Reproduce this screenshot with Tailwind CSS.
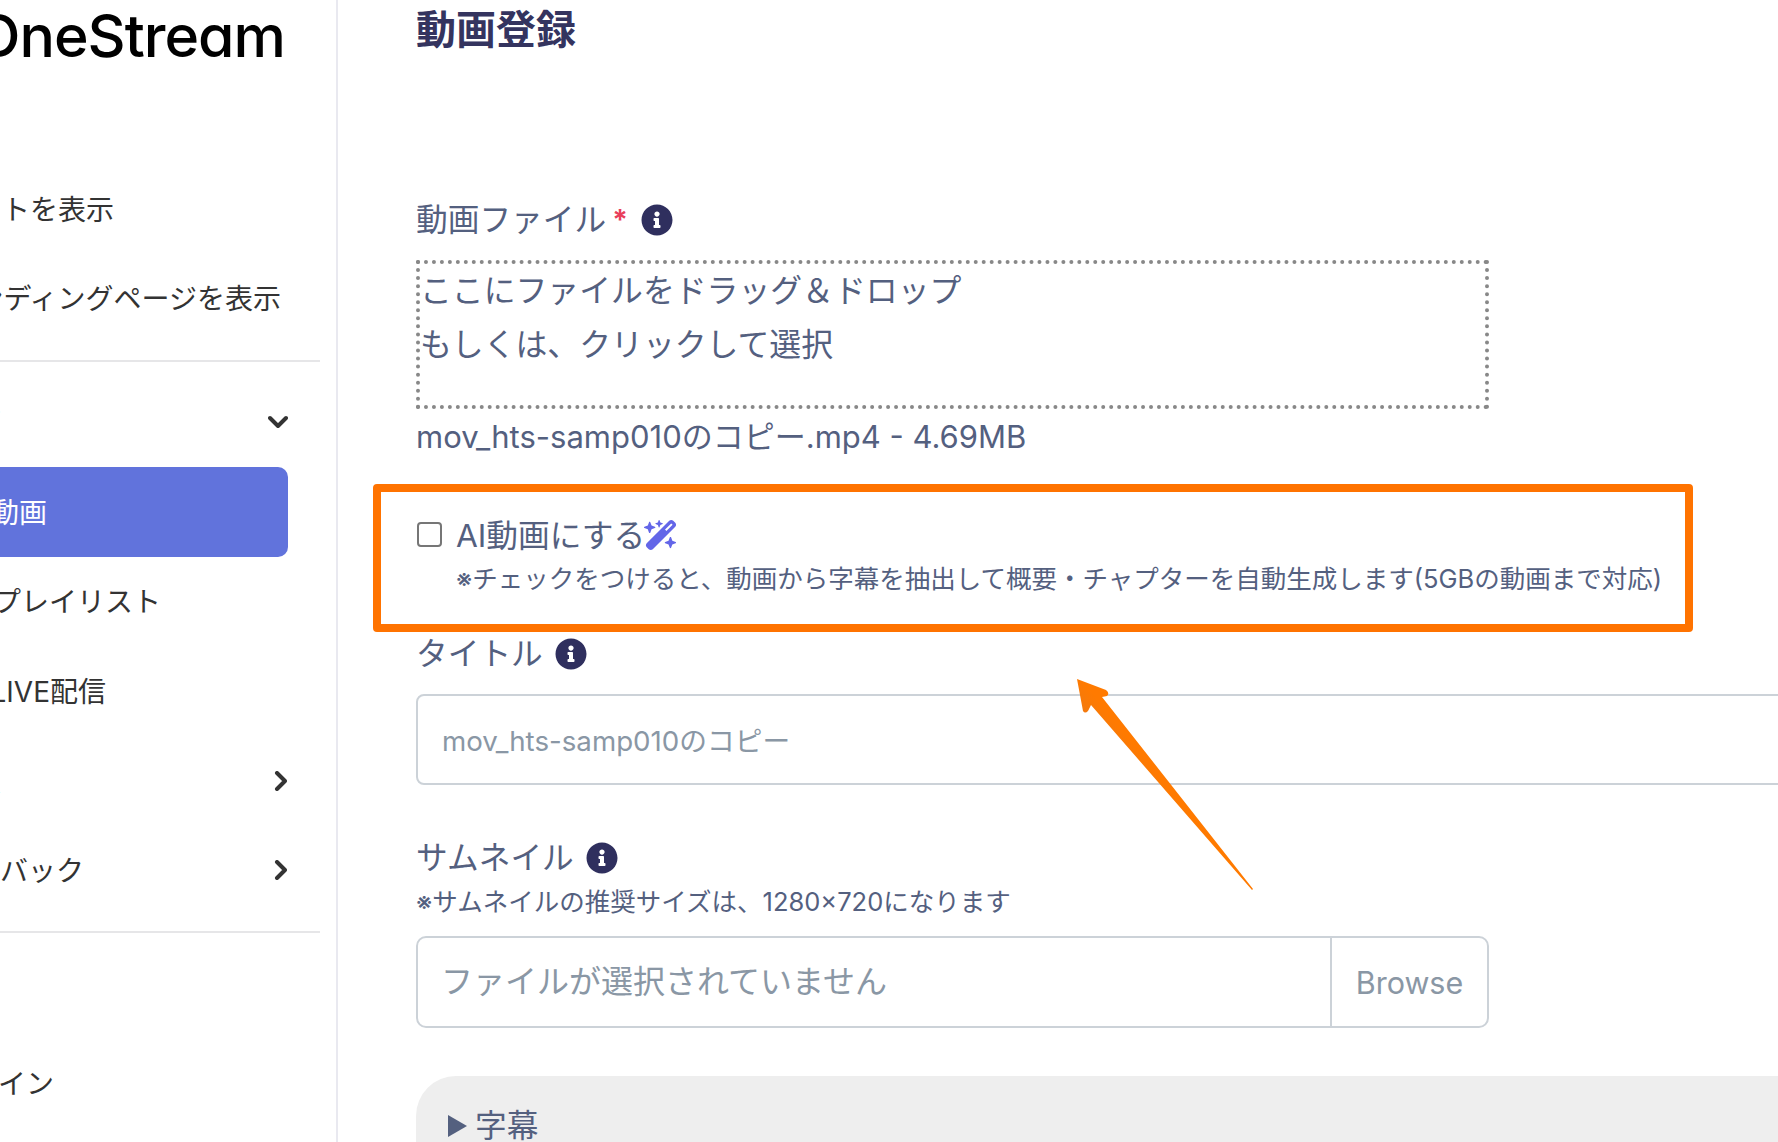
<!DOCTYPE html>
<html lang="ja">
<head>
<meta charset="utf-8">
<script src="https://cdn.jsdelivr.net/npm/@tailwindcss/browser@4"></script>
<title>動画登録</title>
</head>
<body class="bg-white">
<div class="relative flex w-[1778px] h-[1142px] overflow-hidden bg-white font-['Inter','Noto_Sans_CJK_JP',sans-serif]">

  <aside class="w-[338px] shrink-0 h-full overflow-hidden border-r-2 border-[#e9e9f0] text-[28px] text-[#333333] flex flex-col whitespace-nowrap">
    <div class="h-[70px] pt-[3px] flex items-center justify-end pr-[51px] text-[59px] font-[550] text-black tracking-[-1px] [font-feature-settings:'cv11']">OneStream</div>

    <div class="mt-[94px] h-[90px] pt-[2px] flex items-center justify-end pr-[222px]">ポータルサイトを表示</div>
    <div class="h-[88px] pt-[2px] flex items-center justify-end pr-[55px]">ランディングページを表示</div>
    <div class="mt-[18px] w-[320px] shrink-0 h-[2px] bg-[#e6e6e8]"></div>

    <div class="mt-[15px] h-[90px] flex items-center pl-[268px] relative">
      <span class="absolute right-[335px] mt-[2px]">動画</span>
      <svg class="w-[20px] h-[14px]" viewBox="0 0 20 14" fill="none" stroke="#333" stroke-width="4" stroke-linecap="round" stroke-linejoin="round"><path d="M2 3l8 8 8-8"/></svg>
    </div>
    <div class="h-[90px] pt-[2px] w-[288px] shrink-0 bg-[#6173dc] rounded-r-[10px] flex items-center justify-end pr-[241px] text-white">動画</div>
    <div class="h-[89px] flex items-center justify-end pr-[175px]">再生プレイリスト</div>
    <div class="h-[90px] pt-[2px] flex items-center justify-end pr-[230px]">LIVE配信</div>
    <div class="h-[89px] flex items-center pl-[274px] relative">
      <span class="absolute right-[335px] mt-[2px]">設定</span>
      <svg class="w-[13px] h-[20px]" viewBox="0 0 13 20" fill="none" stroke="#333" stroke-width="4" stroke-linecap="round" stroke-linejoin="round"><path d="M3 2l8 8-8 8"/></svg>
    </div>
    <div class="h-[89px] flex items-center pl-[274px] relative">
      <span class="absolute right-[252px] mt-[2px]">フィードバック</span>
      <svg class="w-[13px] h-[20px]" viewBox="0 0 13 20" fill="none" stroke="#333" stroke-width="4" stroke-linecap="round" stroke-linejoin="round"><path d="M3 2l8 8-8 8"/></svg>
    </div>
    <div class="mt-[17px] w-[320px] shrink-0 h-[2px] bg-[#e6e6e8]"></div>
    <div class="mt-[106px] h-[90px] flex items-center justify-end pr-[282px]">ログイン</div>
  </aside>

  <main class="flex-1 min-w-0 pl-[78px] text-[#54607f] text-[31.7px]">
    <h1 class="h-[60px] flex items-center text-[40px] font-bold text-[#34345f]">動画登録</h1>

    <div class="mt-[140px] h-[40px] flex items-center">
      <span>動画ファイル</span>
      <span class="ml-[6px] text-[#e83e5a] font-bold text-[28px]">*</span>
      <svg class="ml-[13px] w-[32px] h-[32px]" viewBox="0 0 512 512" fill="#2f2f5e"><path d="M256 8C119.043 8 8 119.083 8 256c0 136.997 111.043 248 248 248s248-111.003 248-248C504 119.083 392.957 8 256 8zm0 110c23.196 0 42 18.804 42 42s-18.804 42-42 42-42-18.804-42-42 18.804-42 42-42zm56 254c0 6.627-5.373 12-12 12h-88c-6.627 0-12-5.373-12-12v-24c0-6.627 5.373-12 12-12h12v-64h-12c-6.627 0-12-5.373-12-12v-24c0-6.627 5.373-12 12-12h64c6.627 0 12 5.373 12 12v100h12c6.627 0 12 5.373 12 12v24z"/></svg>
    </div>

    <div class="mt-[20px] w-[1073px] h-[149px] border-[4px] border-dotted border-[#888888] leading-[54px] text-[31.85px]">
      <div>ここにファイルをドラッグ＆ドロップ</div>
      <div>もしくは、クリックして選択</div>
    </div>

    <div class="mt-[8px] h-[40px] leading-[40px] text-[31px]">mov_hts-samp010のコピー.mp4 - 4.69MB</div>

    <div class="mt-[27px] -ml-[43px] w-[1320px] h-[148px] border-[8px] border-[#ff7300] rounded-[4px] pl-[36px] pt-[26px]">
      <div class="flex items-center h-[32px]">
        <span class="w-[25px] h-[25px] border-2 border-[#767676] rounded-[4px] bg-white"></span>
        <span class="ml-[14px] mt-[3px]">AI動画にする</span>
        <svg class="w-[34px] h-[34px] -ml-[1px] mt-[2px]" viewBox="0 0 576 512" fill="#6366e8"><path d="M234.7 42.7L197 56.8c-3 1.1-5 4-5 7.2s2 6.1 5 7.2l37.7 14.1L248.8 123c1.1 3 4 5 7.2 5s6.1-2 7.2-5l14.1-37.7L315 71.2c3-1.1 5-4 5-7.2s-2-6.1-5-7.2L277.3 42.7 263.2 5c-1.1-3-4-5-7.2-5s-6.1 2-7.2 5L234.7 42.7zM46.1 395.4c-18.7 18.7-18.7 49.1 0 67.9l34.6 34.6c18.7 18.7 49.1 18.7 67.9 0L529.9 116.5c18.7-18.7 18.7-49.1 0-67.9L495.3 14.1c-18.7-18.7-49.1-18.7-67.9 0L46.1 395.4zM484.6 82.6l-105 105-23.3-23.3 105-105 23.3 23.3zM7.5 117.2C3 118.9 0 123.2 0 128s3 9.1 7.5 10.8L64 160l21.2 56.5c1.7 4.5 6 7.5 10.8 7.5s9.1-3 10.8-7.5L128 160l56.5-21.2c4.5-1.7 7.5-6 7.5-10.8s-3-9.1-7.5-10.8L128 96 106.8 39.5C105.1 35 100.8 32 96 32s-9.1 3-10.8 7.5L64 96 7.5 117.2zm352 256c-4.5 1.7-7.5 6-7.5 10.8s3 9.1 7.5 10.8L416 416l21.2 56.5c1.7 4.5 6 7.5 10.8 7.5s9.1-3 10.8-7.5L480 416l56.5-21.2c4.5-1.7 7.5-6 7.5-10.8s-3-9.1-7.5-10.8L480 352l-21.2-56.5c-1.7-4.5-6-7.5-10.8-7.5s-9.1 3-10.8 7.5L416 352l-56.5 21.2z"/></svg>
      </div>
      <div class="mt-[10px] ml-[39px] text-[25.5px] leading-[38px] whitespace-nowrap">※チェックをつけると、動画から字幕を抽出して概要・チャプターを自動生成します(5GBの動画まで対応)</div>
    </div>

    <div class="mt-[2px] h-[40px] flex items-center">
      <span>タイトル</span>
      <svg class="ml-[12px] w-[32px] h-[32px]" viewBox="0 0 512 512" fill="#2f2f5e"><path d="M256 8C119.043 8 8 119.083 8 256c0 136.997 111.043 248 248 248s248-111.003 248-248C504 119.083 392.957 8 256 8zm0 110c23.196 0 42 18.804 42 42s-18.804 42-42 42-42-18.804-42-42 18.804-42 42-42zm56 254c0 6.627-5.373 12-12 12h-88c-6.627 0-12-5.373-12-12v-24c0-6.627 5.373-12 12-12h12v-64h-12c-6.627 0-12-5.373-12-12v-24c0-6.627 5.373-12 12-12h64c6.627 0 12 5.373 12 12v100h12c6.627 0 12 5.373 12 12v24z"/></svg>
    </div>

    <div class="mt-[20px] w-[1500px] h-[91px] pt-[4px] border-2 border-[#ccd2d8] rounded-[8px] pl-[24px] flex items-center text-[27.7px] text-[#8a97a5]">mov_hts-samp010のコピー</div>

    <div class="mt-[53px] h-[40px] flex items-center">
      <span>サムネイル</span>
      <svg class="ml-[12px] w-[32px] h-[32px]" viewBox="0 0 512 512" fill="#2f2f5e"><path d="M256 8C119.043 8 8 119.083 8 256c0 136.997 111.043 248 248 248s248-111.003 248-248C504 119.083 392.957 8 256 8zm0 110c23.196 0 42 18.804 42 42s-18.804 42-42 42-42-18.804-42-42 18.804-42 42-42zm56 254c0 6.627-5.373 12-12 12h-88c-6.627 0-12-5.373-12-12v-24c0-6.627 5.373-12 12-12h12v-64h-12c-6.627 0-12-5.373-12-12v-24c0-6.627 5.373-12 12-12h64c6.627 0 12 5.373 12 12v100h12c6.627 0 12 5.373 12 12v24z"/></svg>
    </div>
    <div class="mt-[6px] h-[36px] leading-[36px] text-[25.5px]">※サムネイルの推奨サイズは、1280×720になります</div>

    <div class="mt-[16px] w-[1073px] h-[92px] border-2 border-[#ccd2d8] rounded-[10px] flex items-center text-[#8a97a5]">
      <div class="flex-1 pl-[23px] text-[32px]">ファイルが選択されていません</div>
      <div class="w-[157px] h-full pt-[2px] border-l-2 border-[#ccd2d8] flex items-center justify-center text-[30.5px]">Browse</div>
    </div>

    <div class="mt-[48px] w-[1500px] h-[200px] bg-[#eeeeee] rounded-tl-[40px] pt-[30px] pl-[32px] flex items-start">
      <div class="h-[40px] flex items-center">
        <span class="w-0 h-0 border-y-[11px] border-y-transparent border-l-[19px] border-l-[#54607f]"></span>
        <span class="ml-[8px]">字幕</span>
      </div>
    </div>
  </main>

  <svg class="absolute left-0 top-0 w-[1778px] h-[1142px] pointer-events-none" viewBox="0 0 1778 1142">
    <defs>
      <linearGradient id="arrowFill" x1="1125" y1="785" x2="1150" y2="765" gradientUnits="userSpaceOnUse">
        <stop offset="0" stop-color="#dd6f1c"/>
        <stop offset="0.5" stop-color="#f57a0c"/>
        <stop offset="1" stop-color="#ff7a00"/>
      </linearGradient>
    </defs>
    <path fill="url(#arrowFill)" d="M1077 679L1106 690Q1110 693 1107 696L1102 697L1253 889L1252 890L1091 705L1088 711Q1085 714 1083 711Z"/>
  </svg>
</div>
</body>
</html>
